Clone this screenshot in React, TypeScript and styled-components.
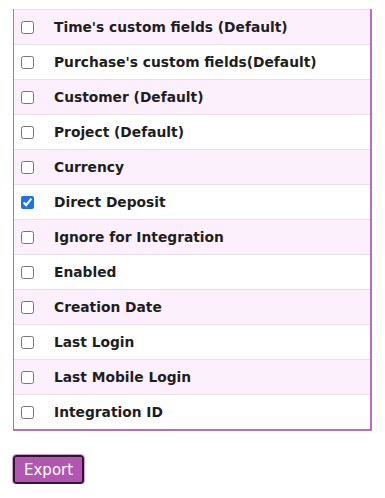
import React, { useState } from 'react';
import styled, { createGlobalStyle } from 'styled-components';

const GlobalStyle = createGlobalStyle`
  body {
    margin: 0;
    background: #ffffff;
    font-family: "DejaVu Sans", Verdana, sans-serif;
  }
`;

const FIELDS = [
  "Time's custom fields (Default)",
  "Purchase's custom fields(Default)",
  'Customer (Default)',
  'Project (Default)',
  'Currency',
  'Direct Deposit',
  'Ignore for Integration',
  'Enabled',
  'Creation Date',
  'Last Login',
  'Last Mobile Login',
  'Integration ID',
];

const Page = styled.div`
  padding: 9px 13px 0 13px;
`;

const FieldList = styled.div`
  width: 359px;
  box-sizing: border-box;
  border: 2px solid #bd6bbd;
  border-top: none;
  border-left-width: 1px;
`;

const Row = styled.label<{ $odd: boolean }>`
  display: flex;
  align-items: center;
  height: 35px;
  box-sizing: border-box;
  border-top: 1px solid #e6e0e6;
  background: ${(p) => (p.$odd ? '#fdf0fd' : '#ffffff')};
  cursor: pointer;
`;

const Check = styled.input`
  width: 13px;
  height: 13px;
  margin: 0 20px 0 7px;
  accent-color: #1a73e8;
`;

const Label = styled.span`
  font-size: 13.8px;
  font-weight: bold;
  color: #1e1e1e;
`;

const Actions = styled.div`
  margin-top: 24px;
`;

const ExportButton = styled.button`
  height: 29px;
  padding: 0 9px;
  background: #b356b3;
  color: #ffffff;
  font-family: "DejaVu Sans", Verdana, sans-serif;
  font-size: 15px;
  border: 2px solid #2a1a2a;
  border-radius: 3px;
  outline: 1px solid #d49ad4;
  cursor: pointer;
`;

const App: React.FC = () => {
  const [checked, setChecked] = useState<Record<string, boolean>>({ 'Direct Deposit': true });

  const toggle = (name: string) => {
    setChecked((prev) => ({ ...prev, [name]: !prev[name] }));
  };

  return (
    <Page>
      <GlobalStyle />
      <FieldList>
        {FIELDS.map((name, i) => (
          <Row key={name} $odd={i % 2 === 0}>
            <Check type="checkbox" checked={!!checked[name]} onChange={() => toggle(name)} />
            <Label>{name}</Label>
          </Row>
        ))}
      </FieldList>
      <Actions>
        <ExportButton>Export</ExportButton>
      </Actions>
    </Page>
  );
};

export default App;
